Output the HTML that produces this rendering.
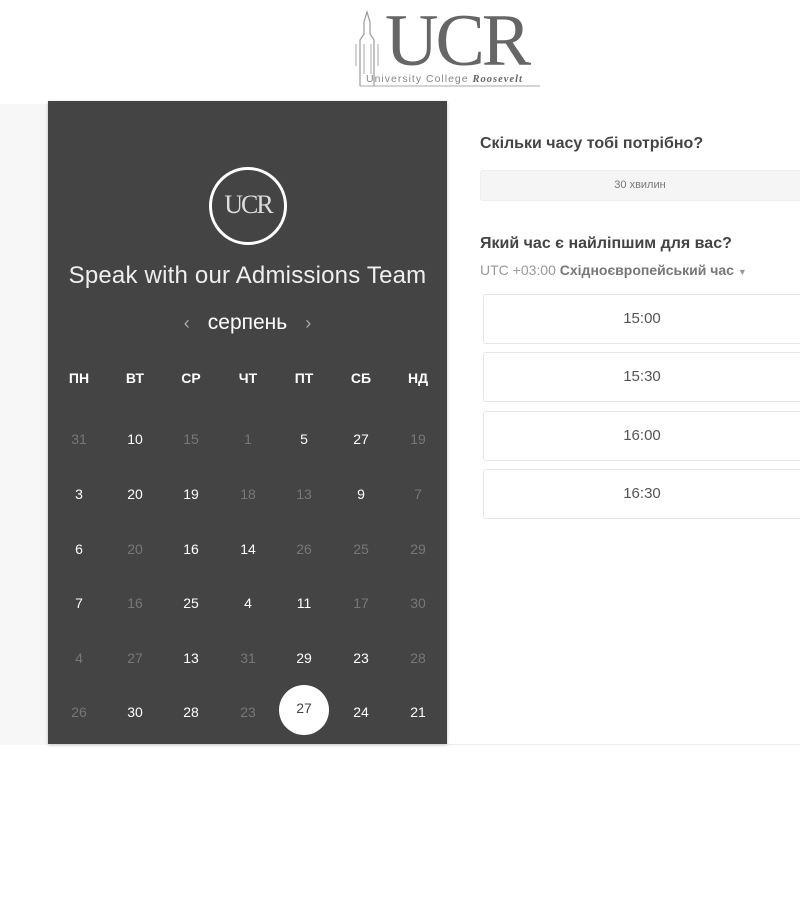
<!DOCTYPE html>
<html><head><meta charset="utf-8"><style>
*{margin:0;padding:0;box-sizing:border-box}
body{width:800px;height:900px;background:#fff;position:relative;overflow:hidden;font-family:"Liberation Sans","DejaVu Sans",sans-serif}
.leftbg{position:absolute;left:0;top:104px;width:48px;height:641px;background:#f7f7f7}
.hr{position:absolute;left:447px;top:744px;width:353px;height:1px;background:#ececec}
.panel{position:absolute;left:48px;top:101px;width:399px;height:643px;background:#444;box-shadow:0 1px 3px rgba(0,0,0,.25)}
.logo{position:absolute;left:352px;top:0px;width:200px;height:92px}
.circle{position:absolute;left:209px;top:167px;width:78px;height:78px;border:3px solid #fff;border-radius:50%;color:#ddd;font-family:"Liberation Serif",serif;font-size:26px;text-align:center;line-height:70px;letter-spacing:-2px}
.title{position:absolute;left:48px;width:399px;top:262px;text-align:center;color:#eee;font-size:24px;white-space:nowrap;letter-spacing:0.2px}
.month{position:absolute;left:48px;width:399px;top:311px;text-align:center;color:#fff;font-size:21px}
.month span{color:#aaa;font-size:18px;margin:0 18px}
.c{position:absolute;width:50px;margin-left:-25px;text-align:center;font-size:14px;color:#fff}
.h{font-weight:bold;font-size:14px}
.d{color:#777}
.sel{position:absolute;left:279px;top:685px;width:50px;height:50px;border-radius:50%;background:#fff;color:#444;text-align:center;line-height:46px;font-size:14px}
.q{position:absolute;left:480px;font-size:16px;font-weight:bold;color:#444}
.dur{position:absolute;left:480px;top:170px;width:330px;height:31px;background:#f5f5f5;border:1px solid #eee;border-radius:3px;text-align:center;line-height:29px;font-size:11px;color:#777;padding-right:10px}
.tz{position:absolute;left:480px;top:262px;font-size:14px;color:#999}
.tz b{color:#777}
.slot{position:absolute;left:483px;width:330px;height:50px;border:1px solid #e6e6e6;border-radius:3px;text-align:center;line-height:48px;font-size:15px;color:#555;padding-right:12px}
</style></head><body>
<div class="leftbg"></div><div class="hr"></div>
<svg class="logo" viewBox="0 0 200 92">
<path d="M8 86V40l4-6v-12l3-10 3 10v12l4 6v46" fill="none" stroke="#999" stroke-width="1.2"/>
<path d="M4 44v22M26 44v22M12 44v30M19 44v30" stroke="#aaa" stroke-width="1"/>
<line x1="8" y1="86" x2="188" y2="86" stroke="#aaa" stroke-width="1"/>
<text x="33" y="65" font-family="Liberation Serif,serif" font-size="74" fill="#666" letter-spacing="-3">UCR</text>
<text x="14" y="82" font-family="Liberation Sans,sans-serif" font-size="10.5" fill="#888" letter-spacing="1">University College <tspan font-family="Liberation Serif,serif" font-style="italic" font-weight="bold" fill="#666">Roosevelt</tspan></text>
</svg>
<div class="panel"></div>
<div class="circle">UCR</div>
<div class="title">Speak with our Admissions Team</div>
<div class="month"><span>‹</span>серпень<span>›</span></div>
<div class="sel">27</div>
<div class="q" style="top:135px">Скільки часу тобі потрібно?</div>
<div class="dur">30 хвилин</div>
<div class="q" style="top:235px">Який час є найліпшим для вас?</div>
<div class="tz">UTC +03:00 <b>Східноєвропейський час</b> <span style="font-size:9px">▼</span></div>
<div class="slot" style="top:294px">15:00</div>
<div class="slot" style="top:352px">15:30</div>
<div class="slot" style="top:411px">16:00</div>
<div class="slot" style="top:469px">16:30</div>
<div class="c h" style="left:79px;top:370px">ПН</div>
<div class="c h" style="left:135px;top:370px">ВТ</div>
<div class="c h" style="left:191px;top:370px">СР</div>
<div class="c h" style="left:248px;top:370px">ЧТ</div>
<div class="c h" style="left:304px;top:370px">ПТ</div>
<div class="c h" style="left:361px;top:370px">СБ</div>
<div class="c h" style="left:418px;top:370px">НД</div>

<div class="c d" style="left:79px;top:431px">31</div><div class="c" style="left:135px;top:431px">10</div><div class="c d" style="left:191px;top:431px">15</div><div class="c d" style="left:248px;top:431px">1</div><div class="c" style="left:304px;top:431px">5</div><div class="c" style="left:361px;top:431px">27</div><div class="c d" style="left:418px;top:431px">19</div>
<div class="c" style="left:79px;top:486px">3</div><div class="c" style="left:135px;top:486px">20</div><div class="c" style="left:191px;top:486px">19</div><div class="c d" style="left:248px;top:486px">18</div><div class="c d" style="left:304px;top:486px">13</div><div class="c" style="left:361px;top:486px">9</div><div class="c d" style="left:418px;top:486px">7</div>
<div class="c" style="left:79px;top:541px">6</div><div class="c d" style="left:135px;top:541px">20</div><div class="c" style="left:191px;top:541px">16</div><div class="c" style="left:248px;top:541px">14</div><div class="c d" style="left:304px;top:541px">26</div><div class="c d" style="left:361px;top:541px">25</div><div class="c d" style="left:418px;top:541px">29</div>
<div class="c" style="left:79px;top:595px">7</div><div class="c d" style="left:135px;top:595px">16</div><div class="c" style="left:191px;top:595px">25</div><div class="c" style="left:248px;top:595px">4</div><div class="c" style="left:304px;top:595px">11</div><div class="c d" style="left:361px;top:595px">17</div><div class="c d" style="left:418px;top:595px">30</div>
<div class="c d" style="left:79px;top:650px">4</div><div class="c d" style="left:135px;top:650px">27</div><div class="c" style="left:191px;top:650px">13</div><div class="c d" style="left:248px;top:650px">31</div><div class="c" style="left:304px;top:650px">29</div><div class="c" style="left:361px;top:650px">23</div><div class="c d" style="left:418px;top:650px">28</div>
<div class="c d" style="left:79px;top:704px">26</div><div class="c" style="left:135px;top:704px">30</div><div class="c" style="left:191px;top:704px">28</div><div class="c d" style="left:248px;top:704px">23</div><div class="c" style="left:361px;top:704px">24</div><div class="c" style="left:418px;top:704px">21</div>
</body></html>
